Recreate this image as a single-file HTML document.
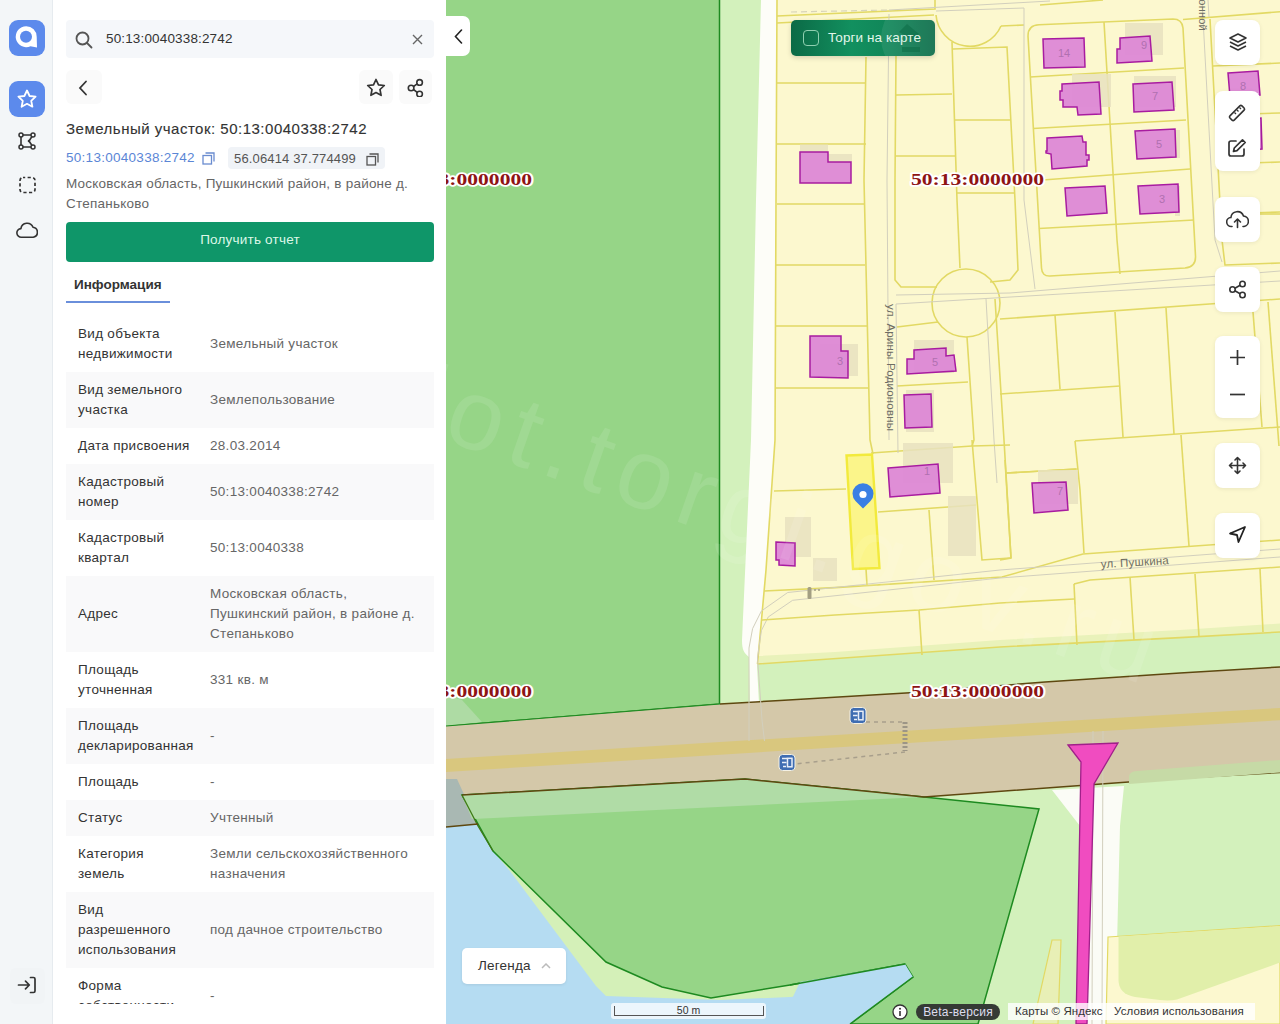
<!DOCTYPE html>
<html><head><meta charset="utf-8">
<style>
*{box-sizing:border-box;margin:0;padding:0}
html,body{width:1280px;height:1024px;overflow:hidden;font-family:"Liberation Sans",sans-serif;background:#fdf8c9}
#map{position:absolute;left:0;top:0;width:1280px;height:1024px}
#rail{position:absolute;left:0;top:0;width:53px;height:1024px;background:#f3f6f8;border-right:1px solid #e6ebef}
#panel{position:absolute;left:53px;top:0;width:393px;height:1024px;background:#fff;overflow:hidden}
.ic{position:absolute}
.search{position:absolute;left:13px;top:20px;width:368px;height:38px;background:#f5f7fa;border-radius:4px}
.search .txt{position:absolute;left:40px;top:11px;font-size:13.5px;color:#333;letter-spacing:0.15px}
.btn{position:absolute;background:#fafafa;border-radius:6px}
.title{position:absolute;left:13px;top:120px;font-size:15px;color:#333;letter-spacing:0.5px;-webkit-text-stroke:0.12px #333}
.link{position:absolute;left:13px;top:150px;font-size:13.5px;color:#5b86d6;letter-spacing:0.28px}
.coord{position:absolute;left:175px;top:147px;width:157px;height:22px;background:#f0f3f7;border-radius:4px}
.coord span{position:absolute;left:6px;top:3.5px;font-size:13px;color:#555;letter-spacing:0.15px}
.addr{position:absolute;left:13px;top:173.5px;width:370px;font-size:13.5px;line-height:20px;color:#666;letter-spacing:0.22px}
.getrep{position:absolute;left:13px;top:222px;width:368px;height:40px;background:#0f9669;border-radius:4px;color:#dcf8e8;font-size:13.5px;text-align:center;line-height:36px;letter-spacing:0.2px}
.tab{position:absolute;left:21px;top:276.5px;font-size:13.5px;font-weight:bold;color:#333}
.tabline{position:absolute;left:13px;top:301px;width:104px;height:2px;background:#6a8fdb}
table{width:368px;border-collapse:collapse}
td{font-size:13.5px;line-height:20px;padding:8px 0;vertical-align:middle;letter-spacing:0.3px}
td.l{padding-left:12px;width:144px;color:#333}
td.v{color:#666}
tr:nth-child(even) td{background:#f9f9fa}
.mbtn{position:absolute;left:1215px;width:45px;background:#fff;border-radius:8px;box-shadow:0 1px 4px rgba(0,0,0,0.08)}

#ui .ic{position:absolute}
.ctab{position:absolute;left:446px;top:16px;width:24px;height:40px;background:#fff;border-radius:0 7px 7px 0}
.torgi{position:absolute;left:791px;top:20px;width:144px;height:36px;border-radius:5px;background:linear-gradient(90deg,#0b6a46 0%,#12905f 42%,#108558 70%,#0c6c49 100%);overflow:hidden;box-shadow:0 2px 5px rgba(0,0,0,0.15)}
.tcirc{position:absolute;left:90px;top:-22px;width:80px;height:80px;border-radius:50%;background:rgba(255,255,255,0.08)}
.tchk{position:absolute;left:12px;top:10px;width:16px;height:16px;border:1.3px solid #8fd0b0;border-radius:4px}
.torgi span{position:absolute;left:37px;top:10px;font-size:13.5px;color:#e2f6ea;letter-spacing:0.1px}
.legend{position:absolute;left:462px;top:948px;width:104px;height:36px;background:#fff;border-radius:5px;box-shadow:0 1px 3px rgba(0,0,0,0.08)}
.legend span{position:absolute;left:16px;top:10px;font-size:13.5px;color:#333;letter-spacing:0.2px}
.scale{position:absolute;left:611px;top:1003px;width:155px;height:16px;background:rgba(255,255,255,0.75);border-radius:3px}
.scale .sb{position:absolute;left:3px;top:3px;width:150px;height:10px;border:1px solid #555;border-top:none}
.scale span{position:absolute;left:0;width:155px;text-align:center;top:1px;font-size:10.5px;color:#333}
.beta{position:absolute;left:916px;top:1004px;width:84px;height:16px;border-radius:8px;background:#353a35;color:#dde;font-size:12px;line-height:16px;text-align:center;letter-spacing:0.2px}
.attr{position:absolute;left:1008px;top:1003px;width:247px;height:17px;background:rgba(255,255,255,0.8)}
.attr span{position:absolute;top:1.5px;font-size:11.5px;color:#333;letter-spacing:0.1px;white-space:nowrap}
.tblwrap{position:absolute;left:13px;top:316px;width:368px;height:688px;overflow:hidden}
</style></head>
<body>
<svg id="map" width="1280" height="1024" viewBox="0 0 1280 1024">
<rect x="0" y="0" width="1280" height="1024" fill="#d3f1bc"/>
<polygon points="400,-10 719.5,-10 719.5,704 400,730" fill="#96d587" stroke="#1d8a20" stroke-width="1.5" />
<polygon points="446,695 462,700 482,722 446,726" fill="#aedba4" stroke="none" stroke-width="0" />
<path d="M761,0 L778,0 L775,440 L766,570 L760,640 L757,666 L759,703 L750,703 L749,657 C744,653 742,650 742,640 L751,440 L756,200 Z" fill="#fdfdf8"/>
<polygon points="777,0 1280,0 1280,632 1180,637.6 1000,647 757.5,664 766,570 775,440 776,200" fill="#fcf8cf" stroke="none" stroke-width="0" />
<polygon points="759,656 835,652 1000,640 1180,630 1280,623.5 1280,632 1180,637.6 1000,647 759,664" fill="#e9f2ba" stroke="none" stroke-width="0" />
<polygon points="446,726 720,704 780,700.6 910,692.8 1045,682 1180,673 1280,667 1280,772.5 1180,778.2 1060,787 924,797 745,779 462,795 446,796" fill="#d4c8a9" stroke="none" stroke-width="0" />
<polygon points="446,759 770,739 1180,714 1280,708 1280,720.2 1180,726.3 770,751.5 446,772" fill="#d9c77e" stroke="none" stroke-width="0" />
<polygon points="446,779 457,779 462,790 478,824 446,827" fill="#a9b8b3" stroke="none" stroke-width="0" />
<polygon points="446,827 478,824 493,851 606,962 662,987 711,998 790,985 905,964 913,977 850,1024 446,1024" fill="#b5dcf2" stroke="none" stroke-width="0" />
<polygon points="478,824 493,851 510,871 596,986 606,996 720,1000 790,997 880,990 913,977 905,964 790,985 711,998 662,987 606,962 493,851" fill="#d4f0b8" stroke="none" stroke-width="0" />
<polygon points="462,795 745,779 924,797 1039,809 978,1024 850,1024 913,977 905,964 790,985 711,998 662,987 606,962 493,851" fill="#96d587" stroke="#1d8a20" stroke-width="1.5" />
<polygon points="462,795 745,779 924,797 860,800 472,819" fill="#b0dca6" stroke="none" stroke-width="0" />
<polyline points="462,795 478,826 493,851" fill="none" stroke="#3f7a16" stroke-width="1.3" />
<polygon points="780,1024 850,1024 913,977 905,964 800,982" fill="#b5dcf2" stroke="none" stroke-width="0" />
<polyline points="913,977 850,1024" fill="none" stroke="#1d8a20" stroke-width="1.5" />
<polyline points="905,964 790,985" fill="none" stroke="#1d8a20" stroke-width="1.5" />
<polyline points="720,704 780,700.6 910,692.8 1045,682 1180,673 1280,667" fill="none" stroke="#5e4810" stroke-width="1.5" />
<polyline points="462,795 745,779 924,797 1060,787 1180,778.2 1280,772.5" fill="none" stroke="#5e4810" stroke-width="1.5" />
<polyline points="446,827 478,824" fill="none" stroke="#5e4810" stroke-width="1.5" />
<polyline points="446,726 720,704" fill="none" stroke="#1d8a20" stroke-width="1.2" />
<polygon points="1052,790 1124,786 1120,826 1115,1024 1076,1024 1080,826" fill="#fbfcf6" stroke="none" stroke-width="0" />
<path d="M1129,784 L1129,777 Q1129,771.5 1137,771 L1280,760 L1280,772.5 Z" fill="#c6daa6"/>
<polygon points="1108,937 1280,925.7 1280,1024 1106,1024" fill="#fcf8cf" stroke="#e2d964" stroke-width="1.2" />
<path d="M1118.5,936.5 L1280,926 L1280,962.6 L1177,999.4 Q1170,1001 1160,1000 L1135,997 Q1118.5,994 1118.5,980 Z" fill="#e1efaa"/>
<polygon points="1052,940 1061,940 1058,1024 1033,1024" fill="#e8efb6" stroke="#e2d964" stroke-width="1.2" />
<polyline points="1093,731 1092,1024" fill="none" stroke="#d2cfbd" stroke-width="1" />
<polyline points="1103,731 1102,1024" fill="none" stroke="#d2cfbd" stroke-width="1" />
<path d="M1068,745 L1118,743 L1094,784 L1087,1024 L1076,1024 L1081,762 Z" fill="#f04cc0" stroke="#a0208a" stroke-width="1.3"/>
<polyline points="866,722 905,722" fill="none" stroke="#a89f8c" stroke-width="1.5" stroke-dasharray="4 4"/>
<polyline points="905,722 905,751" fill="none" stroke="#9c9586" stroke-width="5" stroke-dasharray="2 2"/>
<polyline points="905,752 795,764" fill="none" stroke="#a89f8c" stroke-width="1.5" stroke-dasharray="4 4"/>
<rect x="850" y="707.5" width="16" height="16" rx="3.5" fill="#3f6db2" stroke="#f4f1e4" stroke-width="1"/>
<path d="M853,711.5 h5 M853,715.5 h4.5 M854,719.5 h3" stroke="#e8eef8" stroke-width="1.6"/><rect x="858.5" y="711.3" width="4.5" height="8.5" fill="none" stroke="#e8eef8" stroke-width="1.5"/>
<rect x="779" y="754.5" width="16" height="16" rx="3.5" fill="#3f6db2" stroke="#f4f1e4" stroke-width="1"/>
<path d="M782,758.5 h5 M782,762.5 h4.5 M783,766.5 h3" stroke="#e8eef8" stroke-width="1.6"/><rect x="787.5" y="758.3" width="4.5" height="8.5" fill="none" stroke="#e8eef8" stroke-width="1.5"/>
<polyline points="777,0 776,200 775,440 766,570 757.5,664" fill="none" stroke="#e2d964" stroke-width="1.6" />
<polyline points="757.5,664 1000,647 1180,637.6 1280,632" fill="none" stroke="#e2d964" stroke-width="1.6" />
<polyline points="777,16 935,9 935,0" fill="none" stroke="#e2d964" stroke-width="1.6" />
<polyline points="791,12 889,10" fill="none" stroke="#d8d4b8" stroke-width="1.2" stroke-dasharray="6 4"/>
<polyline points="889,10 1050,1" fill="none" stroke="#d2cfbd" stroke-width="1" />
<polyline points="777,23 934,15" fill="none" stroke="#e2d964" stroke-width="1.6" />
<path d="M936,15 A34 34 0 0 0 1001,26" fill="none" stroke="#e2d964" stroke-width="1.6"/>
<polyline points="1001,26 1024,25" fill="none" stroke="#e2d964" stroke-width="1.6" />
<polyline points="936,11 1024,8 1024,200 1035,289" fill="none" stroke="#d2cfbd" stroke-width="1" />
<polyline points="777,83 866,83" fill="none" stroke="#e2d964" stroke-width="1.6" />
<polyline points="777,144 866,144" fill="none" stroke="#e2d964" stroke-width="1.6" />
<polyline points="866,57 864,180 870,440 873,454" fill="none" stroke="#e2d964" stroke-width="1.6" />
<polyline points="777,204 864,204" fill="none" stroke="#e2d964" stroke-width="1.6" />
<polyline points="776,265 865,265" fill="none" stroke="#e2d964" stroke-width="1.6" />
<polyline points="776,326 867,326" fill="none" stroke="#e2d964" stroke-width="1.6" />
<polyline points="775,388 869,388" fill="none" stroke="#e2d964" stroke-width="1.6" />
<polyline points="774,491 846,489" fill="none" stroke="#e2d964" stroke-width="1.6" />
<polyline points="889,14 887,180 889,440" fill="none" stroke="#d2cfbd" stroke-width="1" />
<polyline points="896,56 895,180 895,280 901,287 937,287" fill="none" stroke="#e2d964" stroke-width="1.6" />
<polyline points="896,95 952,94" fill="none" stroke="#e2d964" stroke-width="1.6" />
<polyline points="895,156 955,156" fill="none" stroke="#e2d964" stroke-width="1.6" />
<polyline points="952,42 957,200 960,268" fill="none" stroke="#e2d964" stroke-width="1.6" />
<polyline points="953,49 1007,47 1015,200 1018,270 1010,280 990,282" fill="none" stroke="#e2d964" stroke-width="1.6" />
<polyline points="955,120 1010,120" fill="none" stroke="#e2d964" stroke-width="1.6" />
<polyline points="957,193 1015,193" fill="none" stroke="#e2d964" stroke-width="1.6" />
<circle cx="966" cy="303" r="34" fill="none" stroke="#e2d964" stroke-width="1.6"/>
<polyline points="896,295 1010,293 1280,271" fill="none" stroke="#d2cfbd" stroke-width="1" />
<polyline points="896,304 994,298 1280,281" fill="none" stroke="#d2cfbd" stroke-width="1" />
<polyline points="897,327 938,322" fill="none" stroke="#e2d964" stroke-width="1.6" />
<polyline points="967,337 974,440 972,446" fill="none" stroke="#e2d964" stroke-width="1.6" />
<polyline points="986,299 994,440 997,483" fill="none" stroke="#d2cfbd" stroke-width="1" />
<polyline points="995,299 1004,440 1011,558 1000,560" fill="none" stroke="#e2d964" stroke-width="1.6" />
<polyline points="897,386 968,382" fill="none" stroke="#e2d964" stroke-width="1.6" />
<polyline points="871,453 972,446 1010,445" fill="none" stroke="#e2d964" stroke-width="1.6" />
<polyline points="896,304 898,453" fill="none" stroke="#d2cfbd" stroke-width="1" />
<polyline points="878,512 976,505" fill="none" stroke="#e2d964" stroke-width="1.6" />
<polyline points="929,510 934,580" fill="none" stroke="#e2d964" stroke-width="1.6" />
<polyline points="972,440 982,560 1010,558" fill="none" stroke="#e2d964" stroke-width="1.6" />
<path d="M1028,36 Q1028,25 1039,24.7 L1173,19 Q1182,19 1183,28 L1195.5,256 Q1196,267 1185,268 L1050,276 Q1042,276.5 1041.5,268 Z" fill="none" stroke="#e2d964" stroke-width="1.6"/>
<polyline points="1104,22 1117,240 1120,274" fill="none" stroke="#e2d964" stroke-width="1.6" />
<polyline points="1030,77 1184,68" fill="none" stroke="#e2d964" stroke-width="1.6" />
<polyline points="1033,128.5 1186,120" fill="none" stroke="#e2d964" stroke-width="1.6" />
<polyline points="1036,180.5 1190,169" fill="none" stroke="#e2d964" stroke-width="1.6" />
<polyline points="1039,228.5 1194,220" fill="none" stroke="#e2d964" stroke-width="1.6" />
<polyline points="1040,5 1103,0" fill="none" stroke="#e2d964" stroke-width="1.6" />
<polyline points="1202,0 1215,240 1222,262" fill="none" stroke="#d2cfbd" stroke-width="1" />
<polyline points="1210,19 1222,240 1225,265 1280,263" fill="none" stroke="#e2d964" stroke-width="1.6" />
<polyline points="1183,19.5 1280,11.7" fill="none" stroke="#e2d964" stroke-width="1.6" />
<polyline points="1208,0 1209,17" fill="none" stroke="#d2cfbd" stroke-width="1" />
<polyline points="1213,66 1280,63" fill="none" stroke="#e2d964" stroke-width="1.6" />
<polyline points="1218,115 1280,113" fill="none" stroke="#e2d964" stroke-width="1.6" />
<polyline points="1220,164 1280,162" fill="none" stroke="#e2d964" stroke-width="1.6" />
<polyline points="1222,214 1280,212" fill="none" stroke="#e2d964" stroke-width="1.6" />
<polyline points="1260,214 1280,214" fill="none" stroke="#e2d964" stroke-width="1.6" />
<polyline points="1000,319 1280,299" fill="none" stroke="#e2d964" stroke-width="1.6" />
<polyline points="1055,315 1060,389" fill="none" stroke="#e2d964" stroke-width="1.6" />
<polyline points="1115,312 1123,437" fill="none" stroke="#e2d964" stroke-width="1.6" />
<polyline points="1166,308 1174,434" fill="none" stroke="#e2d964" stroke-width="1.6" />
<polyline points="1253,312 1262,427" fill="none" stroke="#e2d964" stroke-width="1.6" />
<polyline points="1268,302 1279,446" fill="none" stroke="#e2d964" stroke-width="1.6" />
<polyline points="1000,394 1120,386" fill="none" stroke="#e2d964" stroke-width="1.6" />
<polyline points="1075,441 1280,427" fill="none" stroke="#e2d964" stroke-width="1.6" />
<polyline points="1007,473 1076,469" fill="none" stroke="#e2d964" stroke-width="1.6" />
<polyline points="1075,441 1080,490 1084,553" fill="none" stroke="#e2d964" stroke-width="1.6" />
<polyline points="1181,435 1189,546" fill="none" stroke="#e2d964" stroke-width="1.6" />
<polyline points="1006,473 1077,469" fill="none" stroke="#e2d964" stroke-width="1.6" />
<polyline points="1005,460 1011,558" fill="none" stroke="#e2d964" stroke-width="1.6" />
<polyline points="764,591 835,587.6 1002,577 1083,554 1280,540" fill="none" stroke="#e2d964" stroke-width="1.6" />
<polyline points="749,741 749,648 752.6,628.6 761.4,611 787.7,592.5 1000,570 1280,549" fill="none" stroke="#d2cfbd" stroke-width="1" />
<polyline points="764.5,741 762,720 757.5,658 761.4,630.5 768.2,617 792.6,600.3 1000,578 1280,557" fill="none" stroke="#d2cfbd" stroke-width="1" />
<polyline points="762,620 835,615 919,610 1000,603 1074,599" fill="none" stroke="#e2d964" stroke-width="1.6" />
<polyline points="919,610 922,655" fill="none" stroke="#e2d964" stroke-width="1.6" />
<polyline points="1074,584 1090,580 1280,567" fill="none" stroke="#e2d964" stroke-width="1.6" />
<polyline points="1074,584 1077,645" fill="none" stroke="#e2d964" stroke-width="1.6" />
<polyline points="1130,577 1134,640" fill="none" stroke="#e2d964" stroke-width="1.6" />
<polyline points="1195,574 1199,637" fill="none" stroke="#e2d964" stroke-width="1.6" />
<polyline points="1260,569 1263,632" fill="none" stroke="#e2d964" stroke-width="1.6" />
<polyline points="866,569 867,585" fill="none" stroke="#e2d964" stroke-width="1.6" />
<rect x="807.5" y="587" width="4" height="12" rx="1.5" fill="#a39f83"/>
<polyline points="814,590 822,590" fill="none" stroke="#a39f83" stroke-width="1.5" stroke-dasharray="2 2"/>
<rect x="800" y="144.5" width="28" height="8" fill="#e8e2c0" opacity="0.85"/>
<rect x="828" y="154" width="24" height="8" fill="#e8e2c0" opacity="0.85"/>
<rect x="1125" y="23" width="38" height="32" fill="#e8e2c0" opacity="0.85"/>
<rect x="1072" y="74" width="39" height="33" fill="#e8e2c0" opacity="0.85"/>
<rect x="1134" y="76" width="42" height="31" fill="#e8e2c0" opacity="0.85"/>
<rect x="1175" y="130" width="5" height="28" fill="#e8e2c0" opacity="0.85"/>
<rect x="1175" y="186" width="5" height="30" fill="#e8e2c0" opacity="0.85"/>
<rect x="820" y="344" width="38" height="32" fill="#e8e2c0" opacity="0.85"/>
<rect x="914" y="340" width="40" height="33" fill="#e8e2c0" opacity="0.85"/>
<rect x="906" y="390" width="28" height="42" fill="#e8e2c0" opacity="0.85"/>
<rect x="903" y="443" width="50" height="40" fill="#e8e2c0" opacity="0.85"/>
<rect x="948" y="496" width="28" height="60" fill="#e8e2c0" opacity="0.85"/>
<rect x="785" y="517" width="26" height="40" fill="#e8e2c0" opacity="0.85"/>
<rect x="813" y="558" width="24" height="23" fill="#e8e2c0" opacity="0.85"/>
<rect x="1038" y="470" width="40" height="34" fill="#e8e2c0" opacity="0.85"/>
<polygon points="800,152 828,152 828,162 851,162 851,183 800,183" fill="#dd88d6" stroke="#a81ca0" stroke-width="1.5" fill-opacity="0.95"/>
<polygon points="1043,39 1084,38 1085,67 1044,68" fill="#dd88d6" stroke="#a81ca0" stroke-width="1.5" fill-opacity="0.95"/>
<polygon points="1120,38 1150,36 1152,61 1117,63 1117,49 1120,49" fill="#dd88d6" stroke="#a81ca0" stroke-width="1.5" fill-opacity="0.95"/>
<polygon points="1062,84 1099,82 1101,114 1078,115 1077,107 1063,107 1063,100 1060,100 1060,91 1062,91" fill="#dd88d6" stroke="#a81ca0" stroke-width="1.5" fill-opacity="0.95"/>
<polygon points="1133,84 1172,82 1174,110 1134,112" fill="#dd88d6" stroke="#a81ca0" stroke-width="1.5" fill-opacity="0.95"/>
<polygon points="1047,138 1082,136 1083,142 1086,142 1086,155 1089,155 1089,160 1087,160 1087,166 1052,169 1051,154 1046,153 1046,151 1047,151" fill="#dd88d6" stroke="#a81ca0" stroke-width="1.5" fill-opacity="0.95"/>
<polygon points="1135,131 1175,129 1176,157 1137,159" fill="#dd88d6" stroke="#a81ca0" stroke-width="1.5" fill-opacity="0.95"/>
<polygon points="1065,188 1105,186 1107,213 1067,216" fill="#dd88d6" stroke="#a81ca0" stroke-width="1.5" fill-opacity="0.95"/>
<polygon points="1138,186 1178,184 1179,212 1140,214" fill="#dd88d6" stroke="#a81ca0" stroke-width="1.5" fill-opacity="0.95"/>
<polygon points="1228,73 1258,71 1260,95 1230,97" fill="#dd88d6" stroke="#a81ca0" stroke-width="1.5" fill-opacity="0.95"/>
<polygon points="1240,120 1261,118 1262,149 1242,150" fill="#dd88d6" stroke="#a81ca0" stroke-width="1.5" fill-opacity="0.95"/>
<polygon points="810,336 841,336 841,351 848,351 848,378 810,377" fill="#dd88d6" stroke="#a81ca0" stroke-width="1.5" fill-opacity="0.95"/>
<polygon points="914,350 946,348 946,356 954,355 956,371 907,374 907,359 914,359" fill="#dd88d6" stroke="#a81ca0" stroke-width="1.5" fill-opacity="0.95"/>
<polygon points="904,395 931,394 932,427 905,428" fill="#dd88d6" stroke="#a81ca0" stroke-width="1.5" fill-opacity="0.95"/>
<polygon points="888,468 938,464 940,493 890,497" fill="#dd88d6" stroke="#a81ca0" stroke-width="1.5" fill-opacity="0.95"/>
<polygon points="776,542 795,543 795,566 779,565 779,560 776,560" fill="#dd88d6" stroke="#a81ca0" stroke-width="1.5" fill-opacity="0.95"/>
<polygon points="1032,483 1066,482 1068,510 1034,513" fill="#dd88d6" stroke="#a81ca0" stroke-width="1.5" fill-opacity="0.95"/>
<polygon points="846.5,455.5 872,454.5 879.5,568 853,569" fill="#fbf58a" stroke="#f2ea3c" stroke-width="2.4" />
<path d="M863,508.5 L855.5,501 A10.5 10.5 0 1 1 870.5,501 Z" fill="#3a7fe3"/><circle cx="863" cy="494.5" r="3.6" fill="#fff"/>
<text x="1064" y="57" font-family="Liberation Sans" font-size="11" fill="#b070b0" text-anchor="middle">14</text>
<text x="1144" y="49" font-family="Liberation Sans" font-size="11" fill="#b070b0" text-anchor="middle">9</text>
<text x="1155" y="100" font-family="Liberation Sans" font-size="11" fill="#b070b0" text-anchor="middle">7</text>
<text x="1159" y="148" font-family="Liberation Sans" font-size="11" fill="#b070b0" text-anchor="middle">5</text>
<text x="1162" y="203" font-family="Liberation Sans" font-size="11" fill="#b070b0" text-anchor="middle">3</text>
<text x="1243" y="90" font-family="Liberation Sans" font-size="11" fill="#b070b0" text-anchor="middle">8</text>
<text x="840" y="365" font-family="Liberation Sans" font-size="11" fill="#b070b0" text-anchor="middle">3</text>
<text x="935" y="366" font-family="Liberation Sans" font-size="11" fill="#b070b0" text-anchor="middle">5</text>
<text x="927" y="475" font-family="Liberation Sans" font-size="11" fill="#b070b0" text-anchor="middle">1</text>
<text x="1060" y="495" font-family="Liberation Sans" font-size="11" fill="#b070b0" text-anchor="middle">7</text>
<text transform="translate(887,304) rotate(90)" font-family="Liberation Sans" font-size="11.5" fill="#6d6d63" letter-spacing="0.2">ул. Арины Родионовны</text>
<text transform="translate(1101,568) rotate(-3.2)" font-family="Liberation Sans" font-size="11.5" fill="#6d6d63" letter-spacing="0.2">ул. Пушкина</text>
<text transform="translate(1199,-7) rotate(90)" font-family="Liberation Sans" font-size="11" fill="#6d6d63" letter-spacing="0.2">ионной</text>
<text x="399" y="185" font-family="Liberation Serif" font-weight="bold" font-size="17" fill="#8e1414" stroke="#fff" stroke-width="3.5" stroke-linejoin="round" paint-order="stroke" textLength="133" lengthAdjust="spacingAndGlyphs">50:13:0000000</text>
<text x="911" y="185" font-family="Liberation Serif" font-weight="bold" font-size="17" fill="#8e1414" stroke="#fff" stroke-width="3.5" stroke-linejoin="round" paint-order="stroke" textLength="133" lengthAdjust="spacingAndGlyphs">50:13:0000000</text>
<text x="399" y="697" font-family="Liberation Serif" font-weight="bold" font-size="17" fill="#8e1414" stroke="#fff" stroke-width="3.5" stroke-linejoin="round" paint-order="stroke" textLength="133" lengthAdjust="spacingAndGlyphs">50:13:0000000</text>
<text x="911" y="697" font-family="Liberation Serif" font-weight="bold" font-size="17" fill="#8e1414" stroke="#fff" stroke-width="3.5" stroke-linejoin="round" paint-order="stroke" textLength="133" lengthAdjust="spacingAndGlyphs">50:13:0000000</text>
<text transform="translate(410,428) rotate(19.3)" font-family="Liberation Sans" font-size="100" letter-spacing="10" fill="#ffffff" fill-opacity="0.1">lot.torgi.gov.ru</text>
</svg>

<div id="rail">
  <svg class="ic" style="left:9px;top:20px" width="36" height="36" viewBox="0 0 36 36">
    <rect width="36" height="36" rx="9" fill="#5c8aec"/>
    <path d="M17.2,6.2 A10.5,10.5 0 1 0 21.5,26.3 L28,27.6 L27.7,16.7 A10.5,10.5 0 0 0 17.2,6.2Z" fill="#fff"/>
    <circle cx="17" cy="16.8" r="6" fill="#5c8aec"/>
  </svg>
  <svg class="ic" style="left:9px;top:81px" width="36" height="36" viewBox="0 0 36 36">
    <rect width="36" height="36" rx="9" fill="#5c8aec"/>
    <path d="M18 9.5l2.6 5.5 6 .7-4.4 4.1 1.2 5.9L18 22.8l-5.4 2.9 1.2-5.9-4.4-4.1 6-.7z" fill="none" stroke="#fff" stroke-width="1.8" stroke-linejoin="round"/>
  </svg>
  <svg class="ic" style="left:18px;top:132px" width="18" height="18" viewBox="0 0 18 18"><path d="M3 3H15L11 9L15 15H3Z" fill="none" stroke="#333" stroke-width="1.6" stroke-linejoin="round"/><circle cx="3" cy="3" r="2" fill="#f3f6f8" stroke="#333" stroke-width="1.5"/><circle cx="15" cy="3" r="2" fill="#f3f6f8" stroke="#333" stroke-width="1.5"/><circle cx="3" cy="15" r="2" fill="#f3f6f8" stroke="#333" stroke-width="1.5"/><circle cx="15" cy="15" r="2" fill="#f3f6f8" stroke="#333" stroke-width="1.5"/><circle cx="11" cy="9" r="1.3" fill="#333"/></svg>
  <svg class="ic" style="left:19px;top:176px" width="17" height="18" viewBox="0 0 17 18"><rect x="1" y="1.5" width="15" height="15" rx="3" fill="none" stroke="#333" stroke-width="1.7" stroke-dasharray="3.2 2.4" stroke-dashoffset="1"/></svg>
  <svg class="ic" style="left:16px;top:221px" width="22" height="18" viewBox="0 0 22 18"><path d="M5.5 16.2a4.3 4.3 0 0 1-.6-8.6A6.3 6.3 0 0 1 17 6.3a5 5 0 0 1 .2 9.9z" fill="none" stroke="#333" stroke-width="1.6" stroke-linejoin="round"/></svg>
  <div style="position:absolute;left:10px;top:968px;width:35px;height:36px;background:#f1f4f6;border-radius:6px"></div>
  <svg class="ic" style="left:17px;top:976px" width="20" height="18" viewBox="0 0 20 18"><path d="M1.5 9H12M8.5 5.2L12.3 9 8.5 12.8" fill="none" stroke="#333" stroke-width="1.7" stroke-linecap="round" stroke-linejoin="round"/><path d="M13.5 1.5h3a1.5 1.5 0 0 1 1.5 1.5v12a1.5 1.5 0 0 1-1.5 1.5h-3" fill="none" stroke="#333" stroke-width="1.7" stroke-linecap="round"/></svg>
</div>


<div id="panel">
  <div class="search">
    <svg class="ic" style="left:9px;top:11px" width="18" height="18" viewBox="0 0 18 18"><circle cx="7.5" cy="7.5" r="6" fill="none" stroke="#555" stroke-width="1.8"/><path d="M12 12l4.5 4.5" stroke="#555" stroke-width="1.8" stroke-linecap="round"/></svg>
    <div class="txt">50:13:0040338:2742</div>
    <svg class="ic" style="left:346px;top:14px" width="11" height="11" viewBox="0 0 11 11"><path d="M1 1l9 9M10 1l-9 9" stroke="#666" stroke-width="1.4"/></svg>
  </div>
  <div class="btn" style="left:13px;top:70px;width:36px;height:34px">
    <svg class="ic" style="left:12px;top:10px" width="10" height="16" viewBox="0 0 10 16"><path d="M8 1.5L2 8l6 6.5" fill="none" stroke="#333" stroke-width="1.8" stroke-linecap="round"/></svg>
  </div>
  <div class="btn" style="left:306px;top:70px;width:34px;height:34px"><svg class="ic" style="left:7px;top:8px" width="20" height="19" viewBox="0 0 20 19"><path d="M10 1.5l2.5 5.3 5.8.7-4.3 4 1.1 5.8L10 14.5l-5.1 2.8 1.1-5.8-4.3-4 5.8-.7z" fill="none" stroke="#333" stroke-width="1.7" stroke-linejoin="round"/></svg></div>
  <div class="btn" style="left:346px;top:70px;width:33px;height:34px"><svg class="ic" style="left:8px;top:8px" width="17" height="19" viewBox="0 0 17 19"><circle cx="12.6" cy="4.4" r="2.8" fill="none" stroke="#333" stroke-width="1.6"/><circle cx="4.1" cy="10" r="2.8" fill="none" stroke="#333" stroke-width="1.6"/><circle cx="12.6" cy="16" r="2.8" fill="none" stroke="#333" stroke-width="1.6"/><path d="M6.5 8.5l3.7-2.6M6.5 11.5l3.7 2.8" stroke="#333" stroke-width="1.6"/></svg></div>
  <div class="title">Земельный участок: 50:13:0040338:2742</div>
  <div class="link">50:13:0040338:2742</div>
  <svg class="ic" style="left:149px;top:152px" width="13" height="13" viewBox="0 0 13 13"><rect x="1" y="3.5" width="8.5" height="8.5" fill="none" stroke="#6a8cd0" stroke-width="1.3"/><path d="M3.5 1H12v8.5" fill="none" stroke="#6a8cd0" stroke-width="1.3"/></svg>
  <div class="coord"><span>56.06414 37.774499</span><svg class="ic" style="left:138px;top:6px" width="13" height="13" viewBox="0 0 13 13"><rect x="1" y="3.5" width="8.5" height="8.5" fill="none" stroke="#555" stroke-width="1.3"/><path d="M3.5 1H12v8.5" fill="none" stroke="#555" stroke-width="1.3"/></svg></div>
  <div class="addr">Московская область, Пушкинский район, в районе д. Степанько­во</div>
  <div class="getrep">Получить отчет</div>
  <div class="tab">Информация</div>
  <div class="tabline"></div>
  <div class="tblwrap"><table>
    <tr><td class="l">Вид объекта<br>недвижимости</td><td class="v">Земельный участок</td></tr>
    <tr><td class="l">Вид земельного<br>участка</td><td class="v">Землепользование</td></tr>
    <tr><td class="l">Дата присвоения</td><td class="v">28.03.2014</td></tr>
    <tr><td class="l">Кадастровый<br>номер</td><td class="v">50:13:0040338:2742</td></tr>
    <tr><td class="l">Кадастровый<br>квартал</td><td class="v">50:13:0040338</td></tr>
    <tr><td class="l">Адрес</td><td class="v">Московская область,<br>Пушкинский район, в районе д.<br>Степанько­во</td></tr>
    <tr><td class="l">Площадь<br>уточненная</td><td class="v">331 кв. м</td></tr>
    <tr><td class="l">Площадь<br>декларированная</td><td class="v">-</td></tr>
    <tr><td class="l">Площадь</td><td class="v">-</td></tr>
    <tr><td class="l">Статус</td><td class="v">Учтенный</td></tr>
    <tr><td class="l">Категория<br>земель</td><td class="v">Земли сельскохозяйственного<br>назначения</td></tr>
    <tr><td class="l">Вид<br>разрешенного<br>использования</td><td class="v">под дачное строительство</td></tr>
    <tr><td class="l">Форма<br>собственности</td><td class="v">-</td></tr>
  </table></div>
</div>

<div id="ui">
  <div class="ctab"><svg class="ic" style="left:8px;top:13px" width="9" height="15" viewBox="0 0 9 15"><path d="M7.5 1L1.5 7.5l6 6.5" fill="none" stroke="#222" stroke-width="1.6" stroke-linecap="round"/></svg></div>
  <div class="torgi">
    <div class="tcirc"></div>
    <svg class="ic" style="left:98px;top:4px" width="40" height="30" viewBox="0 0 40 30"><path d="M10 8 L18 0 L30 10 L24 16 Z" fill="#0d6b45" opacity="0.55"/><rect x="13" y="23" width="18" height="5" fill="#0d6b45" opacity="0.55"/></svg>
    <div class="tchk"></div>
    <span>Торги на карте</span>
  </div>
  <div class="mbtn" style="top:20px;height:45px"><svg class="ic" style="left:13px;top:12px" width="20" height="20" viewBox="0 0 20 20"><path d="M10 2L18 6L10 10L2 6Z" fill="none" stroke="#333" stroke-width="1.6" stroke-linejoin="round"/><path d="M2 10L10 14L18 10M2 14L10 18L18 14" fill="none" stroke="#333" stroke-width="1.6" stroke-linejoin="round"/></svg></div>
  <div class="mbtn" style="top:91px;height:80px">
    <svg class="ic" style="left:12px;top:12px" width="20" height="20" viewBox="0 0 20 20"><rect x="1.5" y="7" width="17" height="6" rx="1.5" transform="rotate(-45 10 10)" fill="none" stroke="#333" stroke-width="1.6"/><path d="M7.5 9.5l1.5 1.5M10 7l1.5 1.5M12.5 4.5l1.5 1.5" stroke="#333" stroke-width="1.3"/></svg>
    <svg class="ic" style="left:12px;top:47px" width="20" height="20" viewBox="0 0 20 20"><path d="M9 3H4a2 2 0 0 0-2 2v11a2 2 0 0 0 2 2h11a2 2 0 0 0 2-2v-5" fill="none" stroke="#333" stroke-width="1.7" stroke-linecap="round"/><path d="M15.5 1.8l2.7 2.7L10 12.7l-3.5.8.8-3.5z" fill="none" stroke="#333" stroke-width="1.7" stroke-linejoin="round"/></svg>
  </div>
  <div class="mbtn" style="top:197px;height:45px"><svg class="ic" style="left:11px;top:13px" width="23" height="19" viewBox="0 0 23 19"><path d="M6 16.5H5.5a4.5 4.5 0 0 1-.6-9A6.5 6.5 0 0 1 17.5 6a5.3 5.3 0 0 1 .5 10.5H17" fill="none" stroke="#333" stroke-width="1.6" stroke-linecap="round"/><path d="M11.5 17.5v-8M8.5 12l3-3 3 3" fill="none" stroke="#333" stroke-width="1.6" stroke-linecap="round" stroke-linejoin="round"/></svg></div>
  <div class="mbtn" style="top:267px;height:45px"><svg class="ic" style="left:13px;top:13px" width="19" height="19" viewBox="0 0 19 19"><circle cx="14.5" cy="4" r="2.7" fill="none" stroke="#333" stroke-width="1.6"/><circle cx="4.5" cy="9.5" r="2.7" fill="none" stroke="#333" stroke-width="1.6"/><circle cx="14.5" cy="15" r="2.7" fill="none" stroke="#333" stroke-width="1.6"/><path d="M6.9 8.2l5.2-2.9M6.9 10.8l5.2 2.9" stroke="#333" stroke-width="1.6"/></svg></div>
  <div class="mbtn" style="top:336px;height:82px"><svg class="ic" style="left:14px;top:13px" width="17" height="17" viewBox="0 0 17 17"><path d="M8.5 1v15M1 8.5h15" stroke="#333" stroke-width="1.7"/></svg><svg class="ic" style="left:14px;top:50px" width="17" height="17" viewBox="0 0 17 17"><path d="M1 8.5h15" stroke="#333" stroke-width="1.7"/></svg></div>
  <div class="mbtn" style="top:443px;height:45px"><svg class="ic" style="left:13px;top:13px" width="19" height="19" viewBox="0 0 19 19"><path d="M9.5 1.5v16M1.5 9.5h16M7 4l2.5-2.5L12 4M7 15l2.5 2.5L12 15M4 7L1.5 9.5 4 12M15 7l2.5 2.5L15 12" fill="none" stroke="#333" stroke-width="1.6" stroke-linecap="round" stroke-linejoin="round"/></svg></div>
  <div class="mbtn" style="top:513px;height:45px"><svg class="ic" style="left:13px;top:12px" width="19" height="19" viewBox="0 0 19 19"><path d="M17 2L2 8.5l7 1.5 1.5 7z" fill="none" stroke="#222" stroke-width="1.8" stroke-linejoin="round"/></svg></div>
  <div class="legend"><span>Легенда</span><svg class="ic" style="left:79px;top:15px" width="10" height="6" viewBox="0 0 10 6"><path d="M1 5l4-4 4 4" fill="none" stroke="#bbb" stroke-width="1.5"/></svg></div>
  <div class="scale"><div class="sb"></div><span>50 m</span></div>
  <svg class="ic" style="left:892px;top:1004px" width="16" height="16" viewBox="0 0 16 16"><circle cx="8" cy="8" r="7" fill="#fff" stroke="#333" stroke-width="1.3"/><circle cx="8" cy="4.8" r="1" fill="#333"/><path d="M8 7v5" stroke="#333" stroke-width="1.6"/></svg>
  <div class="beta">Beta-версия</div>
  <div class="attr"><span style="left:7px">Карты © Яндекс</span><span style="left:106px">Условия использования</span></div>
</div>
</body></html>
